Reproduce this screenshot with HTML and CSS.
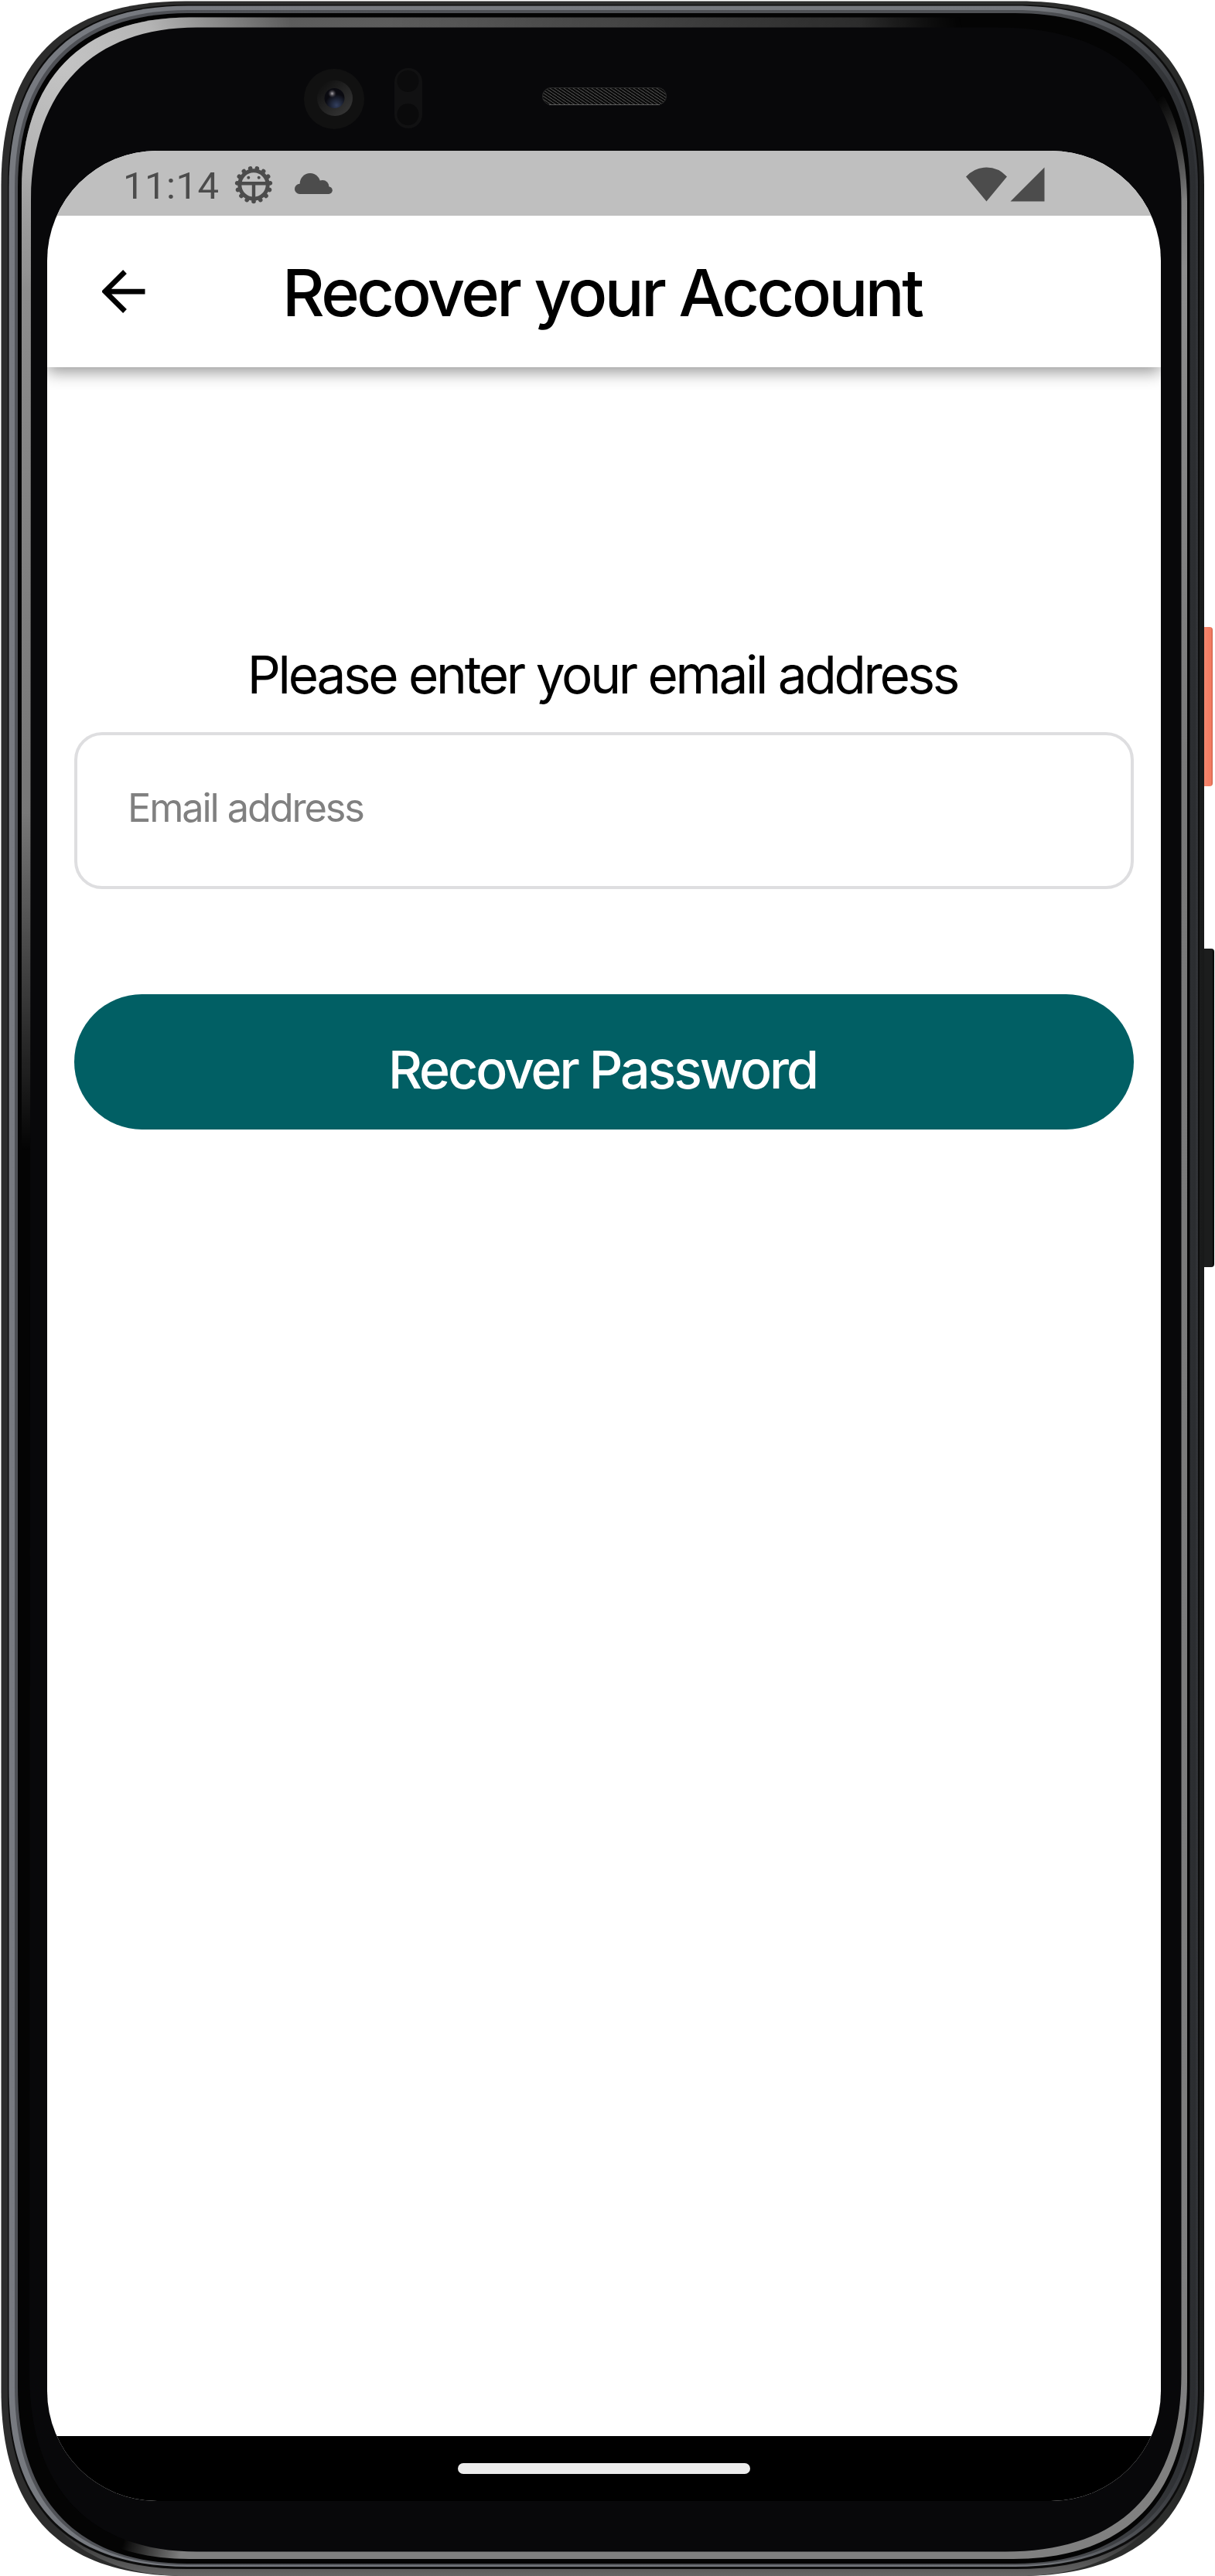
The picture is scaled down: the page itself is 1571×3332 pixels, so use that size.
FILE: index.html
```html
<!DOCTYPE html>
<html lang="en">
<head>
<meta charset="utf-8">
<title>Recover your Account</title>
<link rel="stylesheet" href="styles.css">
</head>
<body>
<div class="phone">
  <svg class="phone-frame" viewBox="0 0 1571 3332" aria-hidden="true">
    <defs>
      <linearGradient id="rim" x1="0" x2="1"><stop offset="0" stop-color="#2c2c2c"/><stop offset=".97" stop-color="#2c2d2c"/><stop offset="1" stop-color="#181919"/></linearGradient>
      <linearGradient id="metal" x1="0" x2="1"><stop offset="0" stop-color="#777a80"/><stop offset=".87" stop-color="#74777c"/><stop offset="1" stop-color="#303236"/></linearGradient>
      <linearGradient id="metal2" x1="0" x2="1"><stop offset="0" stop-color="#4f5156"/><stop offset=".87" stop-color="#4e5054"/><stop offset="1" stop-color="#2b2d30"/></linearGradient>
      <linearGradient id="edge" x1="0" x2="0" y1="0" y2="1"><stop offset="0" stop-color="#5b5b5b"/><stop offset=".1" stop-color="#8d8d8d"/><stop offset=".3" stop-color="#787878"/><stop offset="1" stop-color="#808080"/></linearGradient>
      <radialGradient id="shine" gradientUnits="userSpaceOnUse" cx="80" cy="80" r="300"><stop offset="0" stop-color="#c4c4c4"/><stop offset=".4" stop-color="#b5b5b5"/><stop offset="1" stop-color="#b5b5b5" stop-opacity="0"/></radialGradient>
      <linearGradient id="fade-top" x1="0" x2="1"><stop offset="0" stop-opacity="0"/><stop offset=".75" stop-opacity=".6"/><stop offset="1"/></linearGradient>
      <linearGradient id="fade-left" x1="0" x2="0" y1="0" y2="1"><stop offset="0" stop-opacity="0"/><stop offset=".2"/><stop offset="1"/></linearGradient>
      <radialGradient id="fade-corner"><stop offset=".55"/><stop offset="1" stop-opacity="0"/></radialGradient>
      <mask id="edge-mask" maskUnits="userSpaceOnUse" x="0" y="0" width="1571" height="3332">
        <rect width="1571" height="3332" fill="#fff"/>
        <rect x="500" width="900" height="100" fill="url(#fade-top)"/>
        <circle cx="1400" cy="0" r="290" fill="url(#fade-corner)"/>
        <rect y="1050" width="80" height="2190" fill="url(#fade-left)"/>
        <circle cx="70" cy="3260" r="170" fill="url(#fade-corner)"/>
      </mask>
      <linearGradient id="foot" x1="0" x2="0" y1="0" y2="1"><stop offset="0" stop-color="#050505"/><stop offset="1" stop-color="#666"/></linearGradient>
      <linearGradient id="power" x1="0" x2="1"><stop offset="0" stop-color="#c9573f"/><stop offset=".25" stop-color="#f5886f"/><stop offset=".85" stop-color="#f47b61"/><stop offset="1" stop-color="#c9614b"/></linearGradient>
      <linearGradient id="volume" x1="0" x2="1"><stop offset="0" stop-color="#0b0b0b"/><stop offset=".2" stop-color="#1c1d1d"/><stop offset=".8" stop-color="#1c1d1d"/><stop offset="1" stop-color="#050505"/></linearGradient>
      <radialGradient id="lens" cx=".6" cy=".85" r=".7"><stop offset="0" stop-color="#33405f"/><stop offset=".8" stop-color="#0a0a10"/></radialGradient>
      <radialGradient id="glint"><stop offset="0" stop-color="#b0adb2"/><stop offset="1" stop-color="#444048" stop-opacity="0"/></radialGradient>
      <linearGradient id="ring" x1="0" x2="1" y1="0" y2="1"><stop offset="0" stop-color="#0b0b0b"/><stop offset="1" stop-color="#3a3a3a"/></linearGradient>
      <pattern id="mesh" width="6" height="4" patternUnits="userSpaceOnUse"><rect width="6" height="4" fill="#0b0b0b"/><path d="M0 0l3 2M3 2l3 2" stroke="#626262" stroke-width=".9"/></pattern>
    </defs>

    <!-- side buttons -->
    <rect x="1553" y="811" width="15" height="206" rx="4" fill="url(#power)"/>
    <rect x="1553" y="1227" width="17" height="412" rx="4" fill="url(#volume)"/>

    <!-- body, drawn from the outer rim inwards -->
    <path fill="url(#rim)" d="M1.500 240C1.500 80 80 1.500 240 1.500H1318C1478 1.500 1557 80 1557 240V3092C1557 3252 1478 3332 1318 3332H240C80 3332 1.500 3252 1.500 3092Z"/>
    <path fill="url(#foot)" d="M60 3255C100 3305 160 3332 240 3332H1318C1398 3332 1458 3305 1500 3255L1480 3235Q1430 3314 1310 3322H245Q120 3315 80 3235Z"/>
    <path fill="#0c0c0c" d="M10 242C10 88 88 6 242 6H1314C1472 6 1551 88 1551 242V3092C1551 3242 1470 3323 1314 3323H242C88 3323 10 3242 10 3092Z"/>
    <path fill="url(#metal)" d="M11.500 243C11.500 90 90 7.500 243 7.500H1312C1470 7.500 1549 90 1549 243V3089C1549 3241 1468 3320 1312 3320H243C90 3320 11.500 3241 11.500 3089Z"/>
    <path fill="url(#metal2)" d="M19 243C19 95 95 13 243 13H1312C1464 13 1546 95 1546 243V3087C1546 3237 1462 3318 1312 3318H243C95 3318 19 3237 19 3087Z"/>
    <path fill="#040404" d="M23 243C23 99 99 17 243 17H1312C1459 17 1538.500 99 1538.500 243V3087C1538.500 3233 1457 3316 1312 3316H243C99 3316 23 3233 23 3087Z"/>
    <g mask="url(#edge-mask)">
      <path fill="url(#edge)" d="M28 245C28 104 104 22.500 245 22.500H1290C1455 22.500 1535 104 1535 265V3080C1535 3229 1455 3310 1310 3310H245C104 3310 28 3230 28 3080Z"/>
      <path fill="url(#shine)" d="M28 245C28 104 104 22.500 245 22.500H600V400H28Z"/>
    </g>
    <path fill="#08080a" d="M40 262C40 118 118 35.500 255 35.500H1290C1448 35.500 1527.500 118 1527.500 265V3070C1527.500 3220 1450 3300.500 1300 3300.500H255C118 3300.500 38 3220 38 3070Z"/>

    <!-- camera, sensors, speaker -->
    <circle cx="432" cy="128" r="39" fill="#111"/>
    <circle cx="433" cy="127" r="23" fill="url(#ring)"/>
    <circle cx="432.500" cy="127" r="13" fill="url(#lens)"/>
    <circle cx="429.500" cy="121" r="5.500" fill="url(#glint)"/>
    <rect x="510" y="88" width="36" height="78" rx="18" fill="#111112"/>
    <circle cx="527.500" cy="105" r="14" fill="#0b0b0c"/>
    <circle cx="527.500" cy="148" r="14" fill="#0a0a0b"/>
    <rect x="701.500" y="113.500" width="160" height="22" rx="11" fill="url(#mesh)" stroke="#292929"/>
    <path d="M710 135.500H853" stroke="#5a5a5a"/>
  </svg>

  <main class="screen">
    <div class="status-bar">
      <span class="clock">11:14</span>
      <svg class="status-gear" viewBox="-25 -25 50 50">
        <g fill="none" stroke="#4c4c4c">
          <circle r="18.200" stroke-width="5"/>
          <circle r="21.500" stroke-width="5.600" stroke-linecap="round" pathLength="150" stroke-dasharray=".1 9.900" stroke-dashoffset="-7.450"/>
          <path d="M-17-1.800H17M0-1V17" stroke-width="4.400"/>
        </g>
        <circle cx="-6.700" cy="-9.300" r="2" fill="#4c4c4c"/><circle cx="6.700" cy="-9.300" r="2" fill="#4c4c4c"/>
      </svg>
      <svg class="status-cloud" viewBox="0 0 49 27">
        <g fill="#4c4c4c">
          <circle cx="20" cy="13.300" r="13.300"/><circle cx="36" cy="17.500" r="8.500"/>
          <circle cx="6.600" cy="20.400" r="6.600"/><circle cx="44" cy="22.200" r="4.800"/>
          <path d="M6.600 14H36L44 19V27H6.600Z"/>
        </g>
      </svg>
      <svg class="status-signal" viewBox="0 0 103 45">
        <path fill="#4c4c4c" d="M0 12.500Q11 .5 26.500.5T53 12.500L26.500 44.500ZM57.500 44.500L101.500.5V44.500Z"/>
      </svg>
    </div>

    <header class="app-bar">
      <svg class="back" viewBox="0 0 56 56">
        <path d="M55.500 28.200H4M29.500 2.500L3.700 28L29.500 53.500" fill="none" stroke="#000" stroke-width="6.800"/>
      </svg>
      <h1 class="title">Recover your Account</h1>
    </header>

    <form class="form">
      <label class="prompt" for="email">Please enter your email address</label>
      <input class="email" id="email" type="email" placeholder="Email address">
      <button class="submit" type="button">Recover Password</button>
    </form>

    <div class="nav-bar"><div class="home-pill"></div></div>
  </main>
</div>
</body>
</html>
```

FILE: styles.css
```css
* { box-sizing: border-box; }

body {
  margin: 0;
  background: #fff;
  color: #000;
  font-family: Inter, "Liberation Sans", sans-serif;
}

.phone {
  position: relative;
  width: 1571px;
  height: 3332px;
  padding: 195px 70px 97px 61px;
  overflow: hidden;
}

.phone-frame {
  position: absolute;
  inset: 0;
  width: 1571px;
  height: 3332px;
}

.screen {
  position: relative;
  display: flex;
  flex-direction: column;
  width: 1440px;
  height: 3040px;
  border-radius: 142px;
  overflow: hidden;
  background: #fff;
}

.status-bar {
  position: relative;
  z-index: 1;
  display: flex;
  align-items: center;
  flex: none;
  height: 84px;
  padding: 0 149px 0 98px;
  background: #bfbfbf;
}

.clock {
  width: 144px;
  padding-top: 7px;
  color: #4c4c4c;
  font: 400 49px/60px Roboto, sans-serif;
  letter-spacing: 0.5px;
  white-space: nowrap;
}

.status-gear { width: 50px; height: 50px; margin-top: 4px; }
.status-cloud { width: 49px; height: 27px; margin: 1px 0 0 28px; }
.status-signal { width: 103px; height: 45px; margin-left: auto; margin-top: 3px; }

.app-bar {
  display: flex;
  align-items: center;
  flex: none;
  height: 196px;
  padding-left: 71px;
  box-shadow: 0 6px 20px rgba(0, 0, 0, 0.42);
}

.back { width: 56px; height: 56px; }

.title {
  margin: 2px 0 0 177px;
  font-size: 84.500px;
  font-weight: 500;
  line-height: 100px;
  letter-spacing: -3.450px;
  white-space: nowrap;
}

.form {
  display: flex;
  flex-direction: column;
  flex: 1;
  padding: 357px 35px 0;
}

.prompt {
  height: 115px;
  padding-right: 4px;
  font-size: 67.500px;
  line-height: 82px;
  letter-spacing: -3.3px;
  text-align: center;
  white-space: nowrap;
}

.email {
  height: 203px;
  margin: 0;
  padding: 0 65px 8px;
  border: 4px solid #dedee0;
  border-radius: 36px;
  outline: 0;
  background: #fff;
  font: 400 50.500px/62px Inter, sans-serif;
  letter-spacing: -2.150px;
}

.email::placeholder { color: #808080; opacity: 1; }

.submit {
  height: 175px;
  margin: 136px 0 0;
  padding: 19px 4px 0 0;
  border: 0;
  border-radius: 88px;
  background: #015f64;
  color: #fff;
  font: 500 68px/82px Inter, sans-serif;
  letter-spacing: -3.050px;
}

.nav-bar {
  display: flex;
  justify-content: center;
  flex: none;
  height: 84px;
  padding-top: 35px;
  background: #000;
}

.home-pill {
  width: 378px;
  height: 14px;
  border-radius: 7px;
  background: #ececec;
}
```
